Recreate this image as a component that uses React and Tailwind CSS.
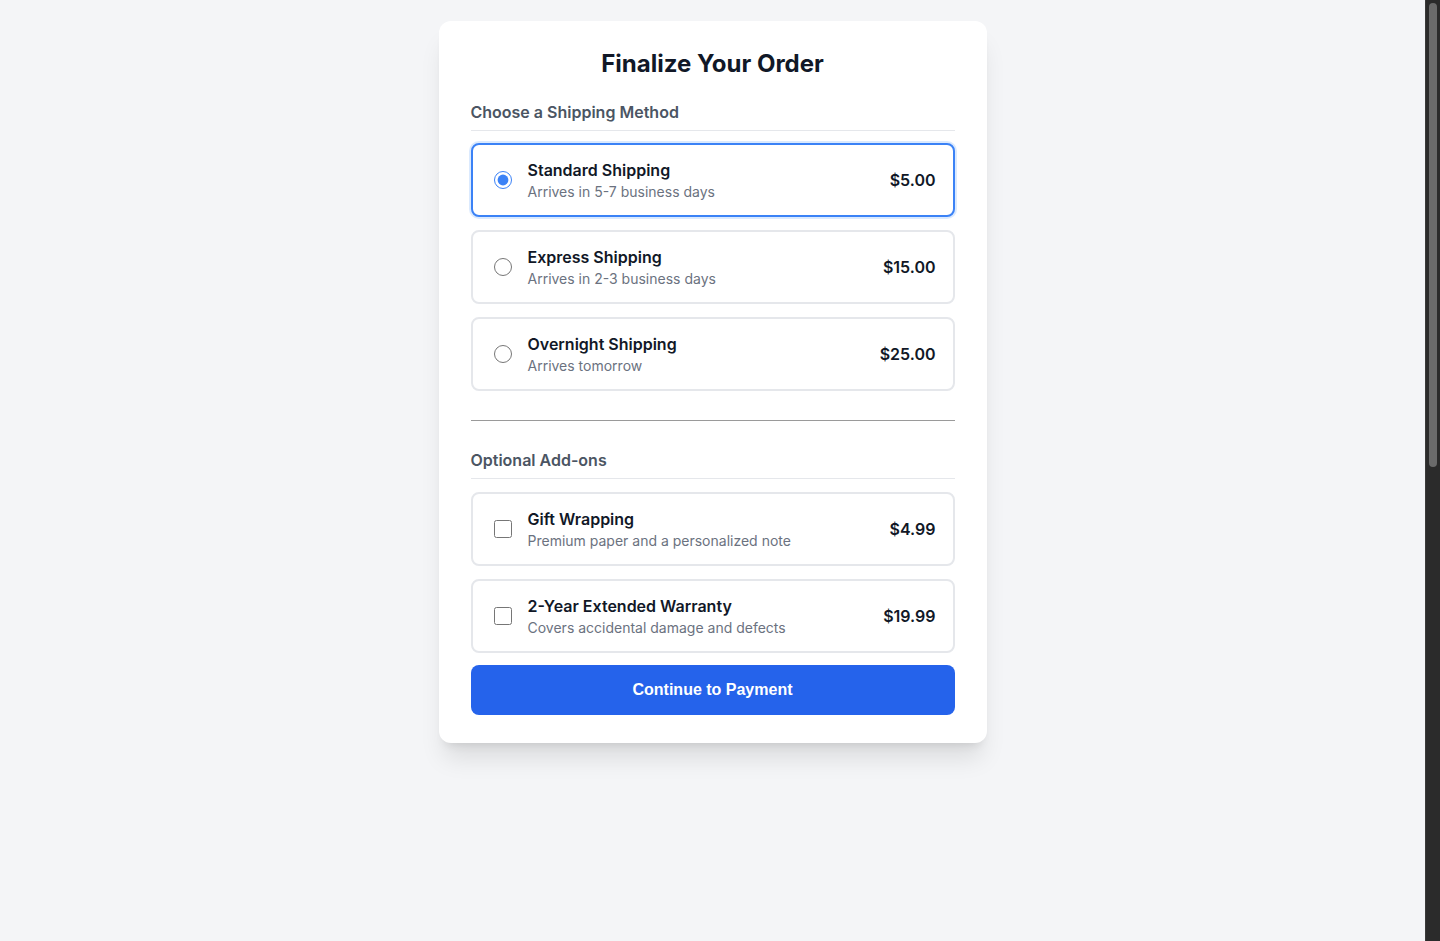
import React, { useState } from 'react';

const shippingOptions = [
  { id: 'standard', name: 'Standard Shipping', desc: 'Arrives in 5-7 business days', price: '$5.00' },
  { id: 'express', name: 'Express Shipping', desc: 'Arrives in 2-3 business days', price: '$15.00' },
  { id: 'overnight', name: 'Overnight Shipping', desc: 'Arrives tomorrow', price: '$25.00' },
];

const addons = [
  { id: 'gift', name: 'Gift Wrapping', desc: 'Premium paper and a personalized note', price: '$4.99' },
  { id: 'warranty', name: '2-Year Extended Warranty', desc: 'Covers accidental damage and defects', price: '$19.99' },
];

function OptionCard({ type, name, desc, price, checked, onChange }) {
  return (
    <label
      className={
        'flex items-center rounded-lg border-2 bg-white pl-[21px] pr-[17px] py-[13px] cursor-pointer ' +
        (checked && type === 'radio' ? 'border-[#3b82f6] ring-2 ring-[#dbeafe]' : 'border-[#e5e7eb]')
      }
    >
      <input
        type={type}
        name={type === 'radio' ? 'shipping' : undefined}
        checked={checked}
        onChange={onChange}
        className="m-0 h-[18px] w-[18px] shrink-0 accent-[#3b82f6]"
      />
      <div className="ml-4 flex-1">
        <div className="text-base font-semibold leading-6 text-[#111827]">{name}</div>
        <div className="text-sm leading-5 text-[#6b7280]">{desc}</div>
      </div>
      <div className="text-base font-semibold text-[#111827]">{price}</div>
    </label>
  );
}

export default function App() {
  const [shipping, setShipping] = useState('standard');
  const [selected, setSelected] = useState({});

  return (
    <div className="flex h-screen overflow-hidden bg-[#f4f5f7] font-['Inter',sans-serif]">
      <main className="flex-1 pt-[21px]">
        <div className="mx-auto w-[548px] rounded-xl bg-white px-8 pt-[29px] pb-7 shadow-xl">
          <h1 className="text-center text-2xl font-bold leading-7 text-[#111827]">Finalize Your Order</h1>

          <h2 className="mt-[22px] border-b border-[#e5e7eb] pb-[6px] text-base font-semibold leading-6 text-[#4b5563]">
            Choose a Shipping Method
          </h2>
          <div className="mt-3 flex flex-col gap-[13px]">
            {shippingOptions.map((o) => (
              <OptionCard
                key={o.id}
                type="radio"
                {...o}
                checked={shipping === o.id}
                onChange={() => setShipping(o.id)}
              />
            ))}
          </div>

          <hr className="mt-[29px] mb-[27px] border-[#9a9a9a]" />

          <h2 className="border-b border-[#e5e7eb] pb-[6px] text-base font-semibold leading-6 text-[#4b5563]">
            Optional Add-ons
          </h2>
          <div className="mt-[13px] flex flex-col gap-[13px]">
            {addons.map((o) => (
              <OptionCard
                key={o.id}
                type="checkbox"
                {...o}
                checked={!!selected[o.id]}
                onChange={() => setSelected({ ...selected, [o.id]: !selected[o.id] })}
              />
            ))}
          </div>

          <button className="mt-3 h-[50px] w-full rounded-lg bg-[#2563eb] font-['Liberation_Sans',Arial,sans-serif] text-base font-bold text-white">
            Continue to Payment
          </button>
        </div>
      </main>

      {/* scrollbar strip */}
      <div className="w-[15px] shrink-0 border-l border-[#3a3a3a] bg-[#2b2b2b] pl-[3px] pr-[3px] pt-[3px]">
        <div className="h-[464px] rounded-full bg-[#6b6b6b]" />
      </div>
    </div>
  );
}
